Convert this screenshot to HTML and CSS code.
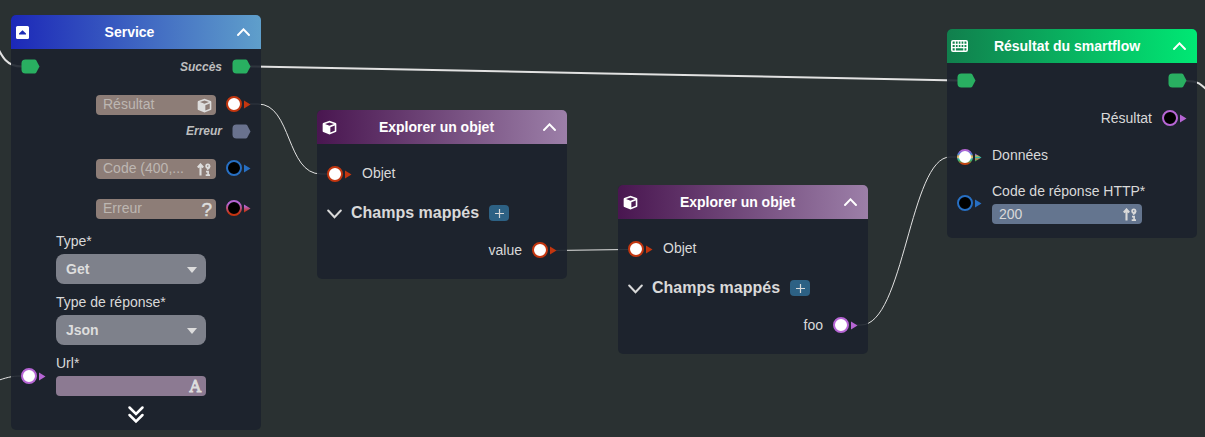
FILE: index.html
```html
<!DOCTYPE html>
<html lang="fr">
<head>
<meta charset="utf-8">
<title>Smartflow</title>
<link rel="stylesheet" href="styles.css">
</head>
<body>
<svg class="defs" width="0" height="0" aria-hidden="true">
  <defs>
    <linearGradient id="pink-red" x1="0" y1="0" x2="0" y2="1"><stop offset=".2" stop-color="#b665d4"/><stop offset=".9" stop-color="#c5330f"/></linearGradient>
    <linearGradient id="multi" gradientUnits="userSpaceOnUse" x1="0" y1="0" x2="0" y2="16"><stop offset=".08" stop-color="#b665d4"/><stop offset=".25" stop-color="#6a6ad4"/><stop offset=".34" stop-color="#4a8fd0"/><stop offset=".44" stop-color="#e8b050"/><stop offset=".54" stop-color="#d8c890"/><stop offset=".62" stop-color="#35b8b0"/><stop offset=".76" stop-color="#48a858"/><stop offset=".9" stop-color="#c5430f"/></linearGradient>
    <linearGradient id="multi-arrow" gradientUnits="userSpaceOnUse" x1="0" y1="4.500" x2="0" y2="12.500"><stop offset=".1" stop-color="#8a65d4"/><stop offset=".32" stop-color="#c8b850"/><stop offset=".5" stop-color="#30b8a8"/><stop offset=".68" stop-color="#d08848"/><stop offset=".9" stop-color="#48a858"/></linearGradient>
    <symbol id="cube" viewBox="0 0 16 16"><path fill="currentColor" fill-rule="evenodd" d="M8 .8 1.300 3.200Q.7 3.500.7 4.200v7.500q0 .8.7 1.100L8 15.500l6.600-2.700q.7-.3.700-1.100V4.200q0-.7-.6-1L8 .8ZM8 2.600l4.800 1.700L8 6.200 3.200 4.300 8 2.600Zm.9 5.200 4.700-1.900v5.600l-4.700 1.900V7.800Z"/></symbol>
    <symbol id="num" viewBox="0 0 14 13"><path d="M3.500 12.500V2M.8 4.500 3.500 1.500 6.200 4.500" fill="none" stroke="currentColor" stroke-width="2.100"/><circle cx="10.800" cy="3" r="1.700" fill="none" stroke="currentColor" stroke-width="1.700"/><path d="M12.500 3q0 2.500-2.600 3.200M9 8.700h2.100v3.500M8.700 12.200H13" fill="none" stroke="currentColor" stroke-width="1.700"/></symbol>
    <symbol id="up" viewBox="0 0 13 8"><path d="M1 7 6.500 1.300 12 7" fill="none" stroke="currentColor" stroke-width="1.900" stroke-linecap="round"/></symbol>
    <symbol id="down" viewBox="0 0 15 10"><path d="M1.200 1.500 7.500 8.200 13.800 1.500" fill="none" stroke="currentColor" stroke-width="2" stroke-linecap="round"/></symbol>
    <symbol id="hex" viewBox="0 0 19 15"><path d="M4.500.5h9.200q1 0 1.500.8L18.500 7.500 15.200 13.700q-.5.8-1.500.8H4.500q-4 0-4-4v-6q0-4 4-4Z" fill="currentColor"/></symbol>
    <symbol id="port" viewBox="0 0 25 16"><circle cx="8" cy="8" r="7" fill="var(--fill)" stroke="var(--tone)" stroke-width="2"/><path d="M18 4.500 24.500 8.500 18 12.500Z" fill="var(--arrow, var(--tone))"/></symbol>
  </defs>
</svg>
<main class="canvas">
  <svg class="wires" width="1205" height="437" viewBox="0 0 1205 437">
    <path class="flow" d="M-6 40C2 58 7 66.500 22 66.500M250 66.500C300 66.500 900 80 958 80.500M1186 81C1199 81 1201 84 1211 94"/>
    <path class="data" d="M250 104H258C292 104 286 174 321 174H328M552 250.500 628 249.500M853 325H861C904 325 910 157 950 157H958M-4 381C6 378 10 376 22 376"/>
  </svg>

  <section class="node service">
    <header class="head blue">
      <svg class="mark" viewBox="0 0 13 13"><rect width="13" height="13" rx="1.500" fill="currentColor"/><path d="M3 8.600V7.400L6.500 4.300 10 7.400V8.600Z" fill="#1d2cb5"/></svg>
      <h2>Service</h2><svg class="toggle"><use href="#up"/></svg>
    </header>
    <div class="row row-flow"><svg class="hex"><use href="#hex"/></svg><em class="out">Succès</em><svg class="hex"><use href="#hex"/></svg></div>
    <div class="row row-result"><span class="field brown">Résultat<svg class="i-cube"><use href="#cube"/></svg></span><svg class="port red"><use href="#port"/></svg></div>
    <div class="row row-error"><em class="out">Erreur</em><svg class="hex idle"><use href="#hex"/></svg></div>
    <div class="row row-code"><span class="field brown">Code (400,...<svg class="i-num"><use href="#num"/></svg></span><svg class="port blue-port hollow"><use href="#port"/></svg></div>
    <div class="row row-err"><span class="field brown">Erreur<b class="query">?</b></span><svg class="port mix hollow"><use href="#port"/></svg></div>
    <div class="form">
      <label>Type*</label>
      <div class="select">Get<i></i></div>
      <label>Type de réponse*</label>
      <div class="select">Json<i></i></div>
      <div class="url-label"><svg class="port pink"><use href="#port"/></svg><label>Url*</label></div>
      <div class="field mauve"><b class="letter">A</b></div>
    </div>
    <svg class="more" viewBox="0 0 16 17"><path d="M1.500 1.500 8 8 14.500 1.500M1.500 9 8 15.500 14.500 9" fill="none" stroke="currentColor" stroke-width="2.500" stroke-linecap="round"/></svg>
  </section>

  <section class="node explore first">
    <header class="head purple"><svg class="i-cube"><use href="#cube"/></svg><h2>Explorer un objet</h2><svg class="toggle"><use href="#up"/></svg></header>
    <div class="row input"><svg class="port red"><use href="#port"/></svg><span>Objet</span></div>
    <div class="row mapped"><svg class="fold"><use href="#down"/></svg><h3>Champs mappés</h3><span class="add"><svg viewBox="0 0 9 9"><path d="M4.500 0v9M0 4.500h9" stroke="currentColor" stroke-width="1.200"/></svg></span></div>
    <div class="row output"><span>value</span><svg class="port red"><use href="#port"/></svg></div>
  </section>

  <section class="node explore second">
    <header class="head purple"><svg class="i-cube"><use href="#cube"/></svg><h2>Explorer un objet</h2><svg class="toggle"><use href="#up"/></svg></header>
    <div class="row input"><svg class="port red"><use href="#port"/></svg><span>Objet</span></div>
    <div class="row mapped"><svg class="fold"><use href="#down"/></svg><h3>Champs mappés</h3><span class="add"><svg viewBox="0 0 9 9"><path d="M4.500 0v9M0 4.500h9" stroke="currentColor" stroke-width="1.200"/></svg></span></div>
    <div class="row output"><span>foo</span><svg class="port pink"><use href="#port"/></svg></div>
  </section>

  <section class="node result">
    <header class="head green">
      <svg class="keys" viewBox="0 0 17 12"><rect x=".8" y=".8" width="15.400" height="10.400" rx="1.200" fill="none" stroke="currentColor" stroke-width="1.600"/><path d="M1 4.300h15M1 7.600h15M4.300 1v10M7.200 1v7M10 1v7M12.900 1v10" stroke="currentColor" stroke-width="1.200"/></svg>
      <h2>Résultat du smartflow</h2><svg class="toggle"><use href="#up"/></svg>
    </header>
    <div class="row row-flow"><svg class="hex"><use href="#hex"/></svg><svg class="hex end"><use href="#hex"/></svg></div>
    <div class="row row-out"><span>Résultat</span><svg class="port pink hollow"><use href="#port"/></svg></div>
    <div class="row row-data"><svg class="port multi"><use href="#port"/></svg><span>Données</span></div>
    <div class="row row-http"><svg class="port blue-port hollow"><use href="#port"/></svg><div class="http"><label>Code de réponse HTTP*</label><div class="field steel">200<svg class="i-num"><use href="#num"/></svg></div></div></div>
  </section>
</main>
</body>
</html>
```
FILE: styles.css
```css
* { box-sizing: border-box; }
body { margin: 0; overflow: hidden; background: #2a3132; color: #d9d9d9; font: 14px/16px "Liberation Sans", Arial, sans-serif; }
svg { display: block; flex: none; overflow: visible; }
h2, h3 { margin: 0; }
.defs { position: absolute; }
.canvas { position: relative; width: 1205px; height: 437px; overflow: hidden; }
.wires { position: absolute; inset: 0; fill: none; stroke: #e2e2e2; }
.flow { stroke-width: 2; }
.data { stroke-width: 1; }

.node { position: absolute; width: 250px; border-radius: 5px; overflow: hidden; background: rgba(28, 34, 44, .9); }
.service { left: 11px; top: 15px; height: 415px; }
.explore { height: 169px; }
.first { left: 317px; top: 110px; }
.second { left: 618px; top: 185px; }
.result { left: 947px; top: 29px; height: 209px; }

.head { display: flex; align-items: center; height: 34px; padding: 0 11px 0 5px; color: #fff; }
.head h2 { flex: 1; padding-right: 7px; font-size: 14px; line-height: 16px; text-align: center; white-space: nowrap; }
.blue { background: linear-gradient(90deg, #1c28b8, #5f9fcb); }
.purple { background: linear-gradient(90deg, #491650, #9c7fa8); }
.green { padding-left: 4px; background: linear-gradient(90deg, #117f4d, #00e874); }
.mark { width: 13px; height: 13px; }
.keys { width: 17px; height: 12px; }
.toggle { width: 13px; height: 8px; }
.i-cube { width: 15px; height: 15px; }
.i-num { width: 14px; height: 13px; }

.row { display: flex; align-items: center; padding: 0 10px; }
.hex { width: 19px; height: 15px; color: #29af61; }
.idle { color: #69728e; }
.out { margin-left: auto; margin-right: 10px; font-size: 12px; font-weight: bold; color: #bebebe; }
.end { margin-left: auto; }
.port { width: 25px; height: 16px; --fill: #fff; }
.hollow { --fill: #000; }
.red { --tone: #c3360f; }
.blue-port { --tone: #276fc3; }
.pink { --tone: #b665d4; }
.mix { --tone: url(#pink-red); }
.multi { --tone: url(#multi); --arrow: url(#multi-arrow); }

.field { display: flex; align-items: center; justify-content: space-between; height: 20px; border-radius: 4px; }
.brown { width: 120px; margin: 2px 10px 0 auto; padding: 0 4px 2px 7px; background: #8d7d77; color: #bdb7b2; white-space: nowrap; }
.brown svg { margin-top: 2px; color: #ddd; }
.brown .i-num { margin-right: 1px; }
.query { margin-top: 3px; font-size: 19px; line-height: 18px; font-weight: normal; color: #ddd; -webkit-text-stroke: .5px; }
.row-flow { height: 36px; padding-bottom: 1px; }
.row-result { height: 38px; }
.row-error { height: 16px; }
.row-code { height: 58px; }
.row-err { height: 22px; }

.form { padding: 14px 55px 0 45px; }
.form label { display: block; height: 21px; line-height: 16px; }
.select { display: flex; align-items: center; justify-content: space-between; height: 30px; margin-bottom: 10px; padding: 0 9px 0 10px; border-radius: 8px; background: #7e818b; color: #ddd; font-weight: bold; }
.select i { margin-top: 2px; border: solid transparent; border-width: 6px 5.5px 0; border-top-color: #ddd; }
.url-label { display: flex; margin-left: -35px; }
.url-label .port { margin: 13px 10px -8px 0; }
.url-label label { height: 21px; }
.mauve { justify-content: flex-end; padding-right: 5px; background: #8c7a92; }
.letter { padding-top: 1px; font: 16px/18px "DejaVu Serif", serif; color: #ddd; -webkit-text-stroke: .9px; }
.more { width: 16px; height: 17px; margin: 10px 0 0 117px; color: #fff; }

.input { height: 58px; gap: 10px; }
.input .port { margin-top: 2px; }
.mapped { height: 22px; gap: 9px; }
.mapped h3 { font-size: 16px; line-height: 20px; }
.fold { width: 15px; height: 10px; margin-top: 2px; }
.add { display: grid; place-items: center; width: 20px; height: 16px; margin-left: 1px; border-radius: 4px; background: #2d6184; }
.add svg { width: 9px; height: 9px; }
.output { height: 51px; justify-content: flex-end; gap: 10px; }

.row-out { height: 38px; justify-content: flex-end; gap: 10px; }
.row-data { height: 36px; gap: 10px; }
.row-data .port { margin-top: 4px; }
.row-http { align-items: flex-start; height: 45px; gap: 10px; padding-top: 10px; }
.row-http .port { margin-top: 12px; }
.http { width: 150px; }
.http label { display: block; height: 21px; white-space: nowrap; }
.steel { padding: 0 5px 0 7px; background: #64758f; }
```
